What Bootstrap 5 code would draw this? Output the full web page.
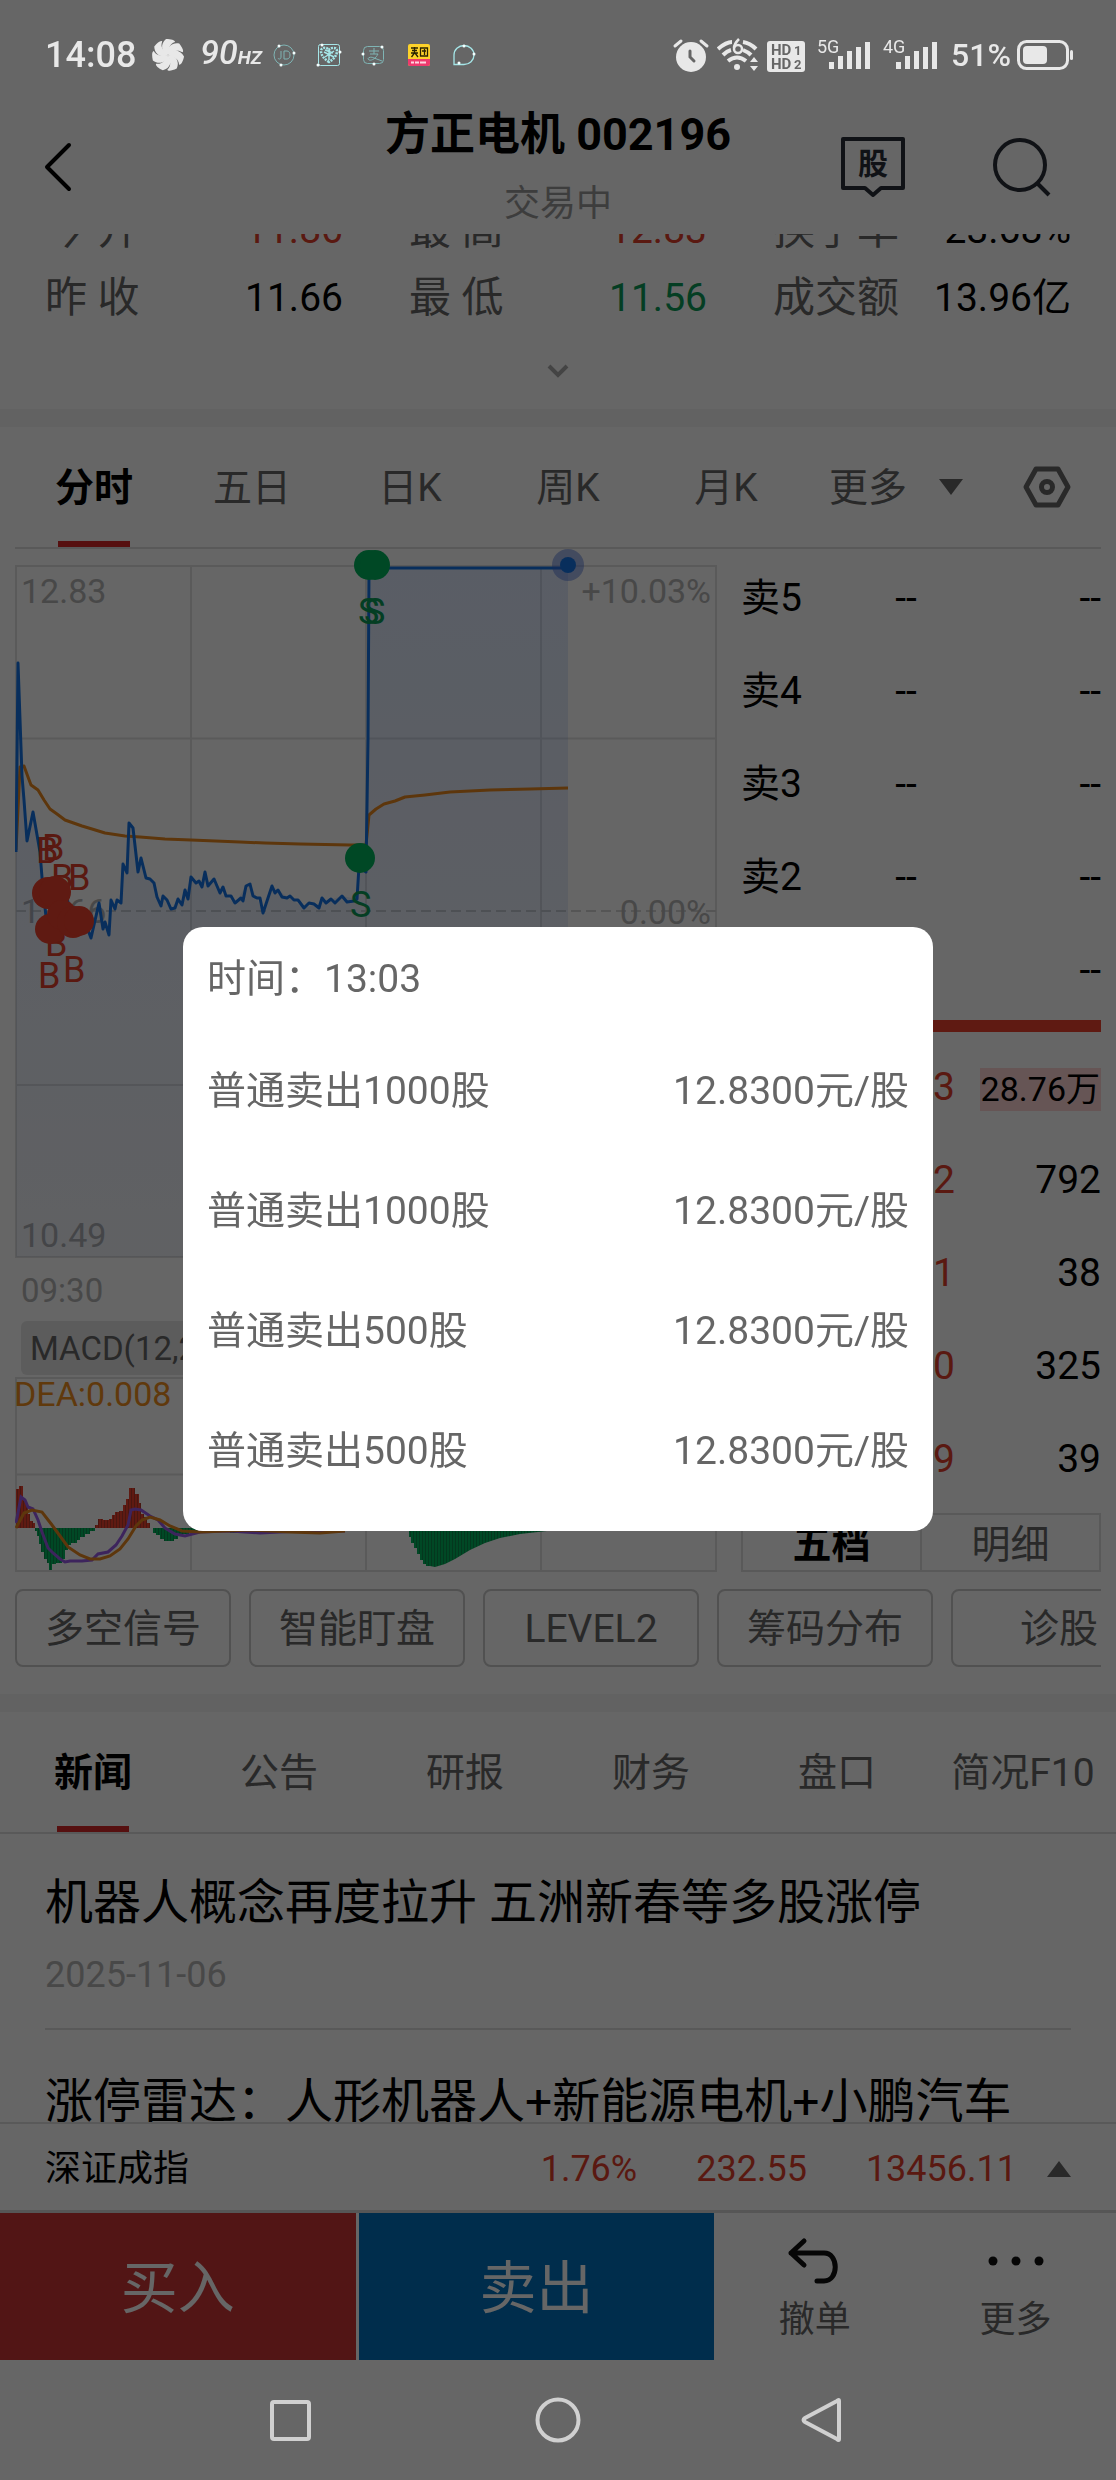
<!DOCTYPE html>
<html lang="zh-CN">
<head>
<meta charset="utf-8">
<meta name="viewport" content="width=device-width, initial-scale=1">
<title>方正电机 002196</title>
<link href="https://cdn.jsdelivr.net/npm/bootstrap@5.3.0/dist/css/bootstrap.min.css" rel="stylesheet">
<style>
  :root { --up: #e0402c; --down: #0a9b57; --muted: #666; --faint: #b4b4b4; --line: #dedede; }
  body { font-family: Roboto, "Noto Sans CJK SC", sans-serif; font-size: 39px; line-height: 54px; color: #000; background: #fff; }
  svg { display: block; }
  button { color: inherit; background: none; border: 0; padding: 0; line-height: inherit; }
  .app { height: 100vh; min-height: 2200px; }
  .up { color: var(--up); }
  .down { color: var(--down); }
  .muted { color: var(--muted); }

  /* system bars stay bright above the backdrop */
  .system-bar { position: relative; z-index: 1060; color: #e8e8e8; }
  .status-bar { height: 94px; padding: 16px 42px 0 45px; }
  .clock-text { font-size: 36px; font-weight: 500; line-height: 44px; }
  .rate-text { font-size: 34px; font-style: italic; font-weight: 500; line-height: 44px; margin-right: -10px; white-space: nowrap; }
  .rate-text b { font-size: 19px; }
  .notice-icons { gap: 13px; }
  .radio-icons { gap: 6px; }
  .battery-text { font-size: 32px; font-weight: 500; line-height: 44px; }
  .system-nav { height: 120px; }

  .title-bar { display: grid; grid-template-columns: 1fr auto 1fr; height: 140px; }
  .title-bar h1 { font-size: 45px; line-height: 82px; font-weight: 700; margin: 0; }
  .title-bar .state { font-size: 36px; line-height: 56px; color: #999; }
  .back { padding: 6px 0 0 44px; }
  .title-icons { gap: 88px; padding: 6px 65px 0 0; }

  .summary { height: 98px; margin: 0 45px; overflow: hidden; }
  .summary-row { gap: 66px; line-height: 68px; }
  .summary-row > div { flex: 1 1 0; }
  .summary-row .muted { font-size: 42px; }
  .expand { height: 77px; }
  .band { height: 18px; background: #f5f5f5; }

  .tab-item { position: relative; text-align: center; height: 120px; line-height: 123px; color: var(--muted); text-decoration: none; white-space: nowrap; }
  .tab-item.active { color: #000; font-weight: 700; }
  .tab-item.active::after { content: ""; position: absolute; left: 50%; bottom: 0; width: 72px; margin-left: -36px; height: 6px; background: #d72828; }
  .period-tabs { margin: 0 15px; border-bottom: 2px solid var(--line); }
  .period-tabs > .tab-item { flex: 1 1 0; }
  .period-tools { width: 296px; gap: 32px; padding: 0 30px 0 24px; }

  .quote { margin: 0 15px; gap: 24px; }
  .chart-side { flex: 702 1 0; min-width: 0; }
  .book-side { flex: 360 1 0; min-width: 0; padding-top: 1px; }
  .chart-side text { font-family: Roboto, sans-serif; font-size: 34px; }
  .chart-side .mark-text text { font-size: 36px; }
  .axis-row { font-size: 33px; line-height: 61px; padding-left: 6px; color: var(--faint); }
  .indicator { font-size: 33px; height: 54px; line-height: 56px; padding: 0 9px; margin-left: 6px; border-radius: 6px; background: #e6e6e6; color: var(--muted); }
  .book { width: 100%; table-layout: fixed; }
  .book td, .book th { height: 93px; padding: 3px 0 0; font-weight: 400; }
  .book th { width: 94px; }
  .book td:nth-child(2) { width: 142px; text-align: center; }
  .book td:nth-child(3) { text-align: right; }
  .hot { display: inline-block; font-size: 34px; line-height: 43px; padding: 0 1px; background: #ffd4d4; white-space: nowrap; vertical-align: middle; }
  .ratio-bar { height: 12px; margin: 5px 0 7px; background: #ed412d; }
  .depth-tabs { margin-top: 9px; border: 2px solid var(--line); }
  .depth-tabs button { flex: 1 1 0; height: 55px; line-height: 60px; }
  .depth-tabs button + button { border-left: 2px solid var(--line); }

  .tools { margin: 16px 15px 27px; gap: 18px; overflow: hidden; }
  .tools button { flex: 0 0 216px; height: 78px; padding-top: 2px; border: 2px solid #cacaca; border-radius: 8px; color: var(--muted); }

  .info-tabs { border-bottom: 2px solid var(--line); }
  .info-tabs .tab-item { flex: 1 1 0; }
  .news { flex: 1 1 0; min-height: 0; overflow: hidden; padding: 0 45px; }
  .news article { padding: 35px 0 28px; border-bottom: 2px solid var(--line); }
  .news article + article { padding-top: 38px; }
  .news h2 { font-size: 48px; line-height: 68px; font-weight: 400; margin: 0; white-space: nowrap; }
  .news time { display: block; font-size: 36px; line-height: 50px; margin-top: 13px; color: var(--faint); }

  .index-bar { height: 91px; padding: 3px 45px 0; font-size: 36px; border-top: 2px solid var(--line); border-bottom: 3px solid #d6d6d6; }
  .index-bar .figures { gap: 59px; }
  .trade-bar { height: 147px; }
  .trade-bar > * { flex: 201 1 0; }
  .trade-bar .deal { flex: 356 1 0; font-size: 57px; padding-top: 4px; color: #fff; }
  .buy { background: #cd3636; margin-right: 3px; }
  .sell { background: #0071be; }
  .trade-bar .side-action { font-size: 36px; line-height: 50px; padding-top: 8px; color: var(--muted); }

  .modal-backdrop { --bs-backdrop-opacity: .6; }
  .modal { padding-bottom: 22px; }
  .fills { max-width: 750px; }
  .fills .modal-content { border: 0; border-radius: 20px; padding: 0 24px 20px; color: #666; }
  .fills h2 { margin: 0; font-size: 39px; font-weight: 400; line-height: 104px; }
  .fill-row { line-height: 120px; }
</style>
</head>
<body>
<div class="app d-flex flex-column overflow-hidden">

  <div class="system-bar status-bar d-flex justify-content-between align-items-center">
    <div class="d-flex align-items-center gap-3">
      <span class="clock-text">14:08</span>
      <svg width="32" height="32" viewBox="-16 -16 32 32" fill="#e8e8e8" aria-hidden="true">
        <path id="blade" d="M0 0C-7-3-8-11-2-16 3-16 7-15 7-13 1-11 1-7 0 0Z"/>
        <use href="#blade" transform="rotate(51.4)"/><use href="#blade" transform="rotate(102.8)"/><use href="#blade" transform="rotate(154.3)"/><use href="#blade" transform="rotate(205.7)"/><use href="#blade" transform="rotate(257.1)"/><use href="#blade" transform="rotate(308.6)"/>
      </svg>
      <span class="rate-text">90<b>HZ</b></span>
      <div class="notice-icons d-flex">
        <svg width="32" height="32" viewBox="0 0 32 32" fill="none" stroke="#7fb4b4" aria-hidden="true"><circle cx="16" cy="16" r="10"/><path d="M13 12v6c0 3-3 2-3 1M16 12v8h3c4 0 4-8 0-8z"/><g fill="#f4ffff" stroke="none"><circle cx="11" cy="7" r="1.500"/><circle cx="26" cy="14" r="1.500"/><circle cx="13" cy="26" r="1.500"/></g></svg>
        <svg width="32" height="32" viewBox="0 0 32 32" fill="none" stroke="#a5e6e8" aria-hidden="true"><rect x="5.500" y="5.500" width="21" height="21" rx="2"/><path d="M16 23C11 20 8 16 8 12c0-4 6-4 8-1 2-3 8-3 8 1 0 4-3 8-8 11z" stroke-width="2.500" stroke-dasharray="2 1"/><path d="M11 13l10 5M21 12l-9 6M16 11v10M12 11l8 3" stroke-width="1.500"/><g fill="#f4ffff" stroke="none"><circle cx="9" cy="6" r="1.500"/><circle cx="27" cy="13" r="1.500"/><circle cx="5" cy="26" r="1.500"/></g></svg>
        <svg width="32" height="32" viewBox="0 0 32 32" fill="none" stroke="#7fb4b4" aria-hidden="true"><rect x="5.500" y="7.500" width="20" height="17" rx="4"/><path d="M11 12h10M16 9v6M12 15h8c-2 4-6 7-9 6-3-2 2-4 5-2l8 3"/><g fill="#f4ffff" stroke="none"><circle cx="24" cy="8" r="1.500"/><circle cx="5" cy="15" r="1.500"/><circle cx="16" cy="25" r="1.500"/></g></svg>
        <svg width="32" height="32" viewBox="0 0 32 32" aria-hidden="true"><rect x="5" y="5" width="22" height="22" rx="2" fill="#fdd22a"/><path d="M5 20h22v5a2 2 0 0 1-2 2H7a2 2 0 0 1-2-2z" fill="#ee3a6e"/><path d="M8 9h7M9 11.500h5M8 14h7M11.500 8v6l-3 4M12 14l3 4M17.500 9h7v8h-7zM19 12h4M21.500 10v6" stroke="#2a2200" stroke-width="1.300" fill="none"/><path d="M8 23.500h3M12 23.500h4M17 23.500h6" stroke="#ffd5e0" stroke-width="2"/></svg>
        <svg width="32" height="32" viewBox="0 0 32 32" fill="none" stroke="#a5e6e8" stroke-width="1.300" aria-hidden="true"><path d="M6 25.500V16a10 9.500 0 1 1 10 9.500z"/><g fill="#f4ffff" stroke="none"><circle cx="16" cy="7" r="1.500"/><circle cx="26" cy="15" r="1.500"/><circle cx="11" cy="24" r="1.500"/></g></svg>
      </div>
    </div>
    <div class="radio-icons d-flex align-items-center">
      <svg width="40" height="36" viewBox="671 36 40 36" fill="#e8e8e8" aria-hidden="true"><circle cx="691" cy="56" r="15"/><g fill="none" stroke-linecap="round" stroke-width="3"><path d="M675 45l6-5M707 45l-6-5" stroke="#e8e8e8"/><path d="M690 50v6l4 4" stroke="#666"/></g></svg>
      <svg width="44" height="36" viewBox="717 36 44 36" fill="none" stroke="#e8e8e8" stroke-width="4" aria-hidden="true"><path d="M718 48q8-7 14-7M743 41q7 1 13 7M723 54q4-4 8-5M743 49q5 2 8 5M728 60q9-7 18 0"/><path d="M739 38q-5 5-5 9" stroke-width="2.500"/><circle cx="738" cy="48" r="4" stroke-width="2.500"/><circle cx="737" cy="66" r="3" fill="#e8e8e8" stroke="none"/><path d="M754 56l4 5h-8zM754 70l4-5h-8z" fill="#e8e8e8" stroke="none"/></svg>
      <svg width="44" height="36" viewBox="767 36 44 36" role="img" aria-label="HD"><rect x="767" y="40" width="38" height="31" rx="3" fill="#e8e8e8"/><g font-family="Roboto, sans-serif" font-weight="700" font-size="15" fill="#666"><text x="771" y="54">HD</text><text x="794" y="54" font-size="13">1</text><text x="771" y="68">HD</text><text x="794" y="68" font-size="13">2</text></g></svg>
      <svg width="60" height="36" viewBox="817 36 60 36" fill="#e8e8e8" role="img" aria-label="5G"><text x="817" y="52" font-family="Roboto, sans-serif" font-size="18">5G</text><path id="bars" d="M829 61h5v7h-5zM838 55h5v13h-5zM847 50h5v18h-5zM856 46h5v22h-5zM865 41h5v27h-5z"/></svg>
      <svg width="62" height="36" viewBox="882 36 62 36" fill="#e8e8e8" role="img" aria-label="4G"><text x="882" y="52" font-family="Roboto, sans-serif" font-size="18">4G</text><use href="#bars" x="66"/></svg>
      <span class="battery-text">51%</span>
      <svg width="57" height="32" viewBox="0 0 57 32" aria-hidden="true"><rect x="1.500" y="2.500" width="49" height="27" rx="8" fill="none" stroke="#e8e8e8" stroke-width="3"/><rect x="6" y="7" width="24" height="18" rx="4" fill="#e8e8e8"/><rect x="53" y="11" width="3" height="10" rx="1.500" fill="#e8e8e8"/></svg>
    </div>
  </div>

  <header class="title-bar">
    <button type="button" class="back text-start" aria-label="返回">
      <svg width="28" height="50" viewBox="0 0 28 50" fill="none" stroke="#000" stroke-width="4" stroke-linecap="round" stroke-linejoin="round"><path d="M25 3L3 25l22 22"/></svg>
    </button>
    <div class="text-center">
      <h1>方正电机 002196</h1>
      <div class="state">交易中</div>
    </div>
    <div class="title-icons d-flex justify-content-end align-items-center">
      <button type="button" aria-label="股吧"><svg width="64" height="60" viewBox="0 0 64 60" fill="none" stroke="#2a2f38" stroke-width="4" stroke-linejoin="round"><path d="M2 2h60v49H40l-8 7-8-7H2z"/><text x="32" y="37" text-anchor="middle" font-family="Noto Sans CJK SC, sans-serif" font-size="30" font-weight="700" fill="#2a2f38" stroke="none">股</text></svg></button>
      <button type="button" aria-label="搜索"><svg width="58" height="60" viewBox="0 0 58 60" fill="none" stroke="#2a2f38" stroke-width="4"><circle cx="27" cy="28" r="25"/><path d="M44 46l12 12"/></svg></button>
    </div>
  </header>

  <section class="summary d-flex flex-column justify-content-end">
    <div class="summary-row d-flex">
      <div class="d-flex justify-content-between"><span class="muted">今 开</span><span class="up">11.86</span></div>
      <div class="d-flex justify-content-between"><span class="muted">最 高</span><span class="up">12.83</span></div>
      <div class="d-flex justify-content-between"><span class="muted">换手率</span><span>23.68%</span></div>
    </div>
    <div class="summary-row d-flex">
      <div class="d-flex justify-content-between"><span class="muted">昨 收</span><span>11.66</span></div>
      <div class="d-flex justify-content-between"><span class="muted">最 低</span><span class="down">11.56</span></div>
      <div class="d-flex justify-content-between"><span class="muted">成交额</span><span>13.96亿</span></div>
    </div>
  </section>
  <button type="button" class="expand d-flex justify-content-center align-items-center" aria-label="展开">
    <svg width="22" height="14" viewBox="0 0 22 14" fill="none" stroke="#aaa" stroke-width="4"><path d="M2 2l9 9 9-9"/></svg>
  </button>
  <div class="band"></div>

  <nav class="period-tabs d-flex">
    <a href="#" class="tab-item active">分时</a><a href="#" class="tab-item">五日</a><a href="#" class="tab-item">日K</a><a href="#" class="tab-item">周K</a><a href="#" class="tab-item">月K</a>
    <div class="period-tools d-flex align-items-center">
      <a href="#" class="tab-item">更多</a>
      <svg width="24" height="16" viewBox="0 0 24 16" aria-hidden="true"><path d="M0 0h24L12 16z" fill="#666"/></svg>
      <button type="button" class="ms-auto" aria-label="设置"><svg width="48" height="42" viewBox="0 0 48 42" fill="none" stroke="#666" stroke-width="5" stroke-linejoin="round"><path d="M13 3h22l10 18-10 18H13L3 21z"/><circle cx="24" cy="21" r="5.500"/></svg></button>
    </div>
  </nav>

  <section class="quote d-flex">
    <div class="chart-side">
      <svg width="100%" viewBox="15 549 702 711" role="img" aria-label="分时走势">
        <defs><linearGradient id="fade" x1="0" y1="0" x2="0" y2="1"><stop offset="0" stop-color="#2a6cf0" stop-opacity=".15"/><stop offset="1" stop-color="#2a50a0" stop-opacity=".07"/></linearGradient></defs>
        <g fill="none" stroke="#e2e2e2" stroke-width="2"><path d="M16 566H716V1257H16zM16 738.500H716M16 1085H716M191 566V1257M366 566V1257M541 566V1257"/><path d="M16 911H716" stroke="#d4d4d4" stroke-dasharray="10 5"/></g>
        <g fill="#b4b4b4"><text x="21" y="603">12.83</text><text x="21" y="923">11.66</text><text x="21" y="1247">10.49</text><text x="711" y="603" text-anchor="end">+10.03%</text><text x="711" y="924" text-anchor="end">0.00%</text></g>
        <path fill="url(#fade)" d="M16 852L18 663 22 776 27 841 33 812 40 852 43 890 47 925 66 895 88 930 91 938 99 903 103 929 105 922 109 935 111 900 115 909 121 903 123 864 127 873 129 823 133 828 138 872 141 858 146 878 154 883 161 906 163 896 171 909 178 899 182 905 191 877 202 887 205 872 208 886 214 879 220 893 235 903 246 886 250 884 257 898 263 913 272 886 304 908 342 896 357 899 359 866 366 872 368 740 369 568 568 568V1257H16Z"/>
        <g fill="none" stroke-width="3" stroke-linejoin="round">
          <path stroke="#e8871e" d="M16 850L20 767 24 766 28 777 31 785 38 790 44 800 50 809 57 814 65 820 82 826 92 829 105 833 125 836 140 837 165 839 191 840 240 842 265 843 300 844 350 845 366 845 369 815 376 809 384 804 395 801 405 797 425 795 450 792 490 790 530 789 568 788"/>
          <path stroke="#1474e6" d="M16 852L18 663 22 776 24 800 27 841 33 812 40 852 43 890 47 925 66 895 70 910 80 925 88 930 91 938 99 903 103 929 105 922 109 935 111 900 115 909 117 900 121 903 123 864 127 873 129 823 133 828 138 872 141 858 146 878 150 879 154 883 157 897 161 906 163 896 167 900 171 909 175 908 178 899 182 905 185 890 188 899 191 877 196 883 199 881 202 887 205 872 208 886 214 879 220 893 223 887 226 896 231 896 235 903 241 898 243 901 246 886 250 884 253 896 257 898 260 898 263 913 268 898 272 886 275 893 278 890 282 897 287 898 290 896 294 900 298 900 304 908 309 903 314 904 319 908 322 898 326 903 331 899 335 903 342 896 347 902 354 901 357 899 359 866 366 872 368 740 369 568 568 568"/>
        </g>
        <circle cx="568" cy="565" r="16" fill="#4169d8" fill-opacity=".45"/><circle cx="568" cy="565" r="8" fill="#1474e6"/>
        <g class="mark-text" fill="#e0402c"><text x="36" y="863">B</text><text x="42" y="860">B</text><text x="51" y="890">B</text><text x="68" y="890">B</text><text x="45" y="956">B</text><text x="38" y="988">B</text><text x="63" y="982">B</text></g>
        <g fill="#ed412d"><circle cx="48" cy="893" r="16"/><circle cx="55" cy="892" r="16"/><circle cx="50" cy="929" r="15"/><circle cx="62" cy="915" r="15"/><circle cx="73" cy="922" r="16"/><circle cx="79" cy="921" r="15"/></g>
        <g fill="#00b35d"><circle cx="369" cy="565" r="15"/><circle cx="375" cy="565" r="15"/><circle cx="360" cy="858" r="15"/></g>
        <g class="mark-text" fill="#0a9b57"><text x="358" y="624">S</text><text x="364" y="624">S</text><text x="350" y="917">S</text></g>
      </svg>
      <div class="axis-row">09:30</div>
      <button type="button" class="indicator d-block">MACD(12,26,9)</button>
      <svg width="100%" viewBox="15 1375 702 198" role="img" aria-label="MACD">
        <defs><pattern id="gbars" width="3" height="10" patternUnits="userSpaceOnUse"><rect width="3" height="10" fill="#0a8a4c"/><rect width="2" height="10" fill="#00b35d"/></pattern><pattern id="rbars" width="3" height="10" patternUnits="userSpaceOnUse"><rect width="3" height="10" fill="#b33a2b"/><rect width="2" height="10" fill="#ed412d"/></pattern></defs>
        <path fill="none" stroke="#e2e2e2" stroke-width="2" d="M16 1378H716V1571H16zM16 1474.500H716M191 1378V1571M366 1378V1571M541 1378V1571"/>
        <text x="14" y="1406" fill="#ef8e1e">DEA:0.008</text>
        <path fill="url(#rbars)" d="M16 1528V1489h3V1486h4V1499h3V1505h2V1514h2V1521h3V1523h2V1528zM95 1528V1525h3V1519h5V1520h6V1519h3V1515h3V1512h4V1511h4V1505h3V1499h3V1488h6V1494h4V1503h2V1514h3V1517h3V1523h3V1528z"/>
        <path fill="url(#gbars)" d="M35 1528V1531h2V1536h2V1544h2V1552h3V1559h3V1563h2V1570h3V1564h4V1563h6V1559h3V1550h3V1545h3V1543h6V1540h3V1537h5V1534h5V1531h5V1528zM153 1528V1533h3V1535h4V1539h4V1541h10V1539h4V1536h5V1534h6V1531h9V1528zM230 1528V1533h12V1528zM407 1528V1531h2V1537h2V1543h3V1548h3V1554h3V1560h3V1564h3V1566h4L435 1567 445 1564 455 1559 470 1550 485 1543 500 1538 520 1534 547 1531V1528z"/>
        <g fill="none" stroke-width="3"><path stroke="#9a5ae8" d="M16 1523L21 1497 25 1500 28 1507 33 1509 38 1520 42 1532 48 1548 53 1553 60 1559 65 1562 70 1561 82 1561 92 1560 98 1554 108 1552 116 1545 122 1536 128 1525 131 1510 135 1509 141 1510 150 1516 158 1520 165 1528 175 1534 185 1536 200 1532 230 1531 260 1533 300 1531 345 1531"/><path stroke="#e8871e" d="M16 1528L24 1513 32 1510 42 1512 52 1525 60 1536 68 1547 80 1555 90 1559 100 1559 110 1556 120 1549 128 1539 136 1526 142 1520 150 1517 160 1520 170 1526 182 1531 200 1532 250 1530 290 1532 320 1533 345 1531"/></g>
      </svg>
    </div>

    <div class="book-side">
      <table class="book">
        <tr><th scope="row">卖5</th><td>--</td><td>--</td></tr>
        <tr><th scope="row">卖4</th><td>--</td><td>--</td></tr>
        <tr><th scope="row">卖3</th><td>--</td><td>--</td></tr>
        <tr><th scope="row">卖2</th><td>--</td><td>--</td></tr>
        <tr><th scope="row">卖1</th><td>--</td><td>--</td></tr>
      </table>
      <div class="ratio-bar"></div>
      <table class="book">
        <tr><th scope="row">买1</th><td class="up">12.83</td><td><span class="hot">28.76万</span></td></tr>
        <tr><th scope="row">买2</th><td class="up">12.82</td><td>792</td></tr>
        <tr><th scope="row">买3</th><td class="up">12.81</td><td>38</td></tr>
        <tr><th scope="row">买4</th><td class="up">12.80</td><td>325</td></tr>
        <tr><th scope="row">买5</th><td class="up">12.79</td><td>39</td></tr>
      </table>
      <div class="depth-tabs d-flex"><button type="button" class="fw-bold">五档</button><button type="button" class="muted">明细</button></div>
    </div>
  </section>

  <div class="tools d-flex">
    <button type="button">多空信号</button><button type="button">智能盯盘</button><button type="button">LEVEL2</button><button type="button">筹码分布</button><button type="button">诊股</button>
  </div>
  <div class="band"></div>

  <nav class="info-tabs d-flex">
    <a href="#" class="tab-item active">新闻</a><a href="#" class="tab-item">公告</a><a href="#" class="tab-item">研报</a><a href="#" class="tab-item">财务</a><a href="#" class="tab-item">盘口</a><a href="#" class="tab-item">简况F10</a>
  </nav>
  <section class="news">
    <article><h2>机器人概念再度拉升 五洲新春等多股涨停</h2><time datetime="2025-11-06">2025-11-06</time></article>
    <article><h2>涨停雷达：人形机器人+新能源电机+小鹏汽车</h2></article>
  </section>

  <div class="index-bar d-flex justify-content-between align-items-center">
    <span>深证成指</span>
    <div class="d-flex align-items-center">
      <div class="figures d-flex up"><span>1.76%</span><span>232.55</span><span>13456.11</span></div>
      <svg class="ms-4" width="30" height="16" viewBox="-6 0 30 16" aria-hidden="true"><path d="M0 16h24L12 0z" fill="#666"/></svg>
    </div>
  </div>
  <div class="trade-bar d-flex">
    <button type="button" class="deal buy">买入</button>
    <button type="button" class="deal sell">卖出</button>
    <button type="button" class="side-action d-flex flex-column align-items-center justify-content-center">
      <svg width="56" height="50" viewBox="0 0 56 50" fill="none" stroke="#111" stroke-width="5" stroke-linecap="round" stroke-linejoin="round" aria-hidden="true"><path d="M17 4L4 16l13 12M4 16h33c15 0 15 28 0 28h-7"/></svg>
      <span class="mt-2">撤单</span>
    </button>
    <button type="button" class="side-action d-flex flex-column align-items-center justify-content-center">
      <svg width="56" height="50" viewBox="0 0 56 50" fill="#111" aria-hidden="true"><circle cx="5" cy="24" r="4.500"/><circle cx="28" cy="24" r="4.500"/><circle cx="51" cy="24" r="4.500"/></svg>
      <span class="mt-2">更多</span>
    </button>
  </div>

  <nav class="system-bar system-nav d-flex justify-content-center align-items-center">
    <svg width="576" height="52" viewBox="0 0 576 52" fill="none" stroke="#d0d0d0" stroke-width="4" stroke-linejoin="round" aria-hidden="true">
      <g id="keys"><rect x="2" y="8" width="37" height="37" rx="2"/><circle cx="288" cy="26" r="20.500"/><path d="M569 7v38q0 2-2 0L535 28q-3-2 0-4L567 7q2-2 2 0z"/></g>
    </svg>
  </nav>
</div>

<div class="modal-backdrop show"></div>
<div class="modal show d-block" tabindex="-1" role="dialog" aria-labelledby="fillTime">
  <div class="modal-dialog modal-dialog-centered fills">
    <div class="modal-content">
      <h2 id="fillTime">时间：13:03</h2>
      <div class="fill-row d-flex justify-content-between"><span>普通卖出1000股</span><span>12.8300元/股</span></div>
      <div class="fill-row d-flex justify-content-between"><span>普通卖出1000股</span><span>12.8300元/股</span></div>
      <div class="fill-row d-flex justify-content-between"><span>普通卖出500股</span><span>12.8300元/股</span></div>
      <div class="fill-row d-flex justify-content-between"><span>普通卖出500股</span><span>12.8300元/股</span></div>
    </div>
  </div>
</div>
<script src="https://cdn.jsdelivr.net/npm/bootstrap@5.3.0/dist/js/bootstrap.bundle.min.js"></script>
</body>
</html>
